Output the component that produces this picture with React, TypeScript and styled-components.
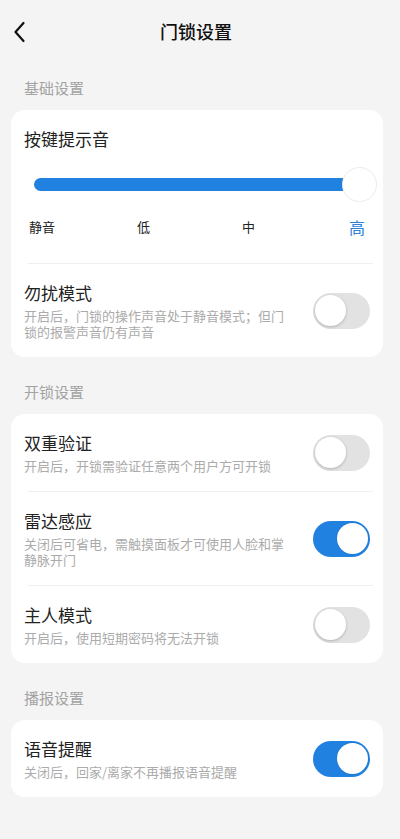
import React from "react";
import styled, { createGlobalStyle } from "styled-components";

const GlobalStyle = createGlobalStyle`
  html, body {
    margin: 0;
    padding: 0;
    background: #f4f4f4;
  }
  body {
    font-family: "Noto Sans CJK SC", "Noto Sans", sans-serif;
    -webkit-font-smoothing: antialiased;
  }
  * { box-sizing: border-box; }
`;

const Page = styled.div`
  width: 400px;
  min-height: 839px;
  background: #f4f4f4;
`;

const Header = styled.header`
  height: 64px;
  display: grid;
  grid-template-columns: 48px 1fr 56px;
  align-items: center;
`;

const BackButton = styled.button`
  border: none;
  background: none;
  padding: 0 0 0 12px;
  height: 64px;
  display: flex;
  align-items: center;
  cursor: pointer;
`;

const Title = styled.h1`
  margin: 0 0 2px;
  text-align: center;
  font-size: 18px;
  font-weight: 500;
  color: #111;
  line-height: 24px;
`;

const SectionTitle = styled.div`
  padding: 14px 24px 12px;
  font-size: 15px;
  line-height: 20px;
  color: #a3a3a3;
`;

const Card = styled.section`
  margin: 0 17px 11px 11px;
  background: #fff;
  border-radius: 14px;
  overflow: hidden;
`;

const SliderBlock = styled.div`
  padding: 17px 0 0;
`;

const BlockTitle = styled.div`
  padding-left: 13px;
  font-size: 17px;
  line-height: 24px;
  color: #222;
`;

const SliderRow = styled.div`
  margin: 16px 6px 0 23px;
  height: 35px;
  display: flex;
  align-items: center;
`;

const Track = styled.div`
  flex: 1;
  height: 13px;
  background: #2081e0;
  border-radius: 7px 0 0 7px;
`;

const Thumb = styled.div`
  width: 35px;
  height: 35px;
  margin-left: -1px;
  border-radius: 50%;
  background: #fff;
  border: 1px solid #ececec;
`;

const Levels = styled.div`
  margin: 15px 0 0;
  padding-left: 18px;
  display: grid;
  grid-template-columns: 108px 105px 107px auto;
  align-items: center;
  height: 20px;
`;

const Level = styled.span<{ $active?: boolean }>`
  font-size: ${(p) => (p.$active ? "16px" : "13px")};
  line-height: 20px;
  color: ${(p) => (p.$active ? "#2a82db" : "#222")};
`;

const Divider = styled.div<{ $top?: number }>`
  height: 1px;
  background: #efefef;
  margin: ${(p) => p.$top ?? 0}px 10px 0 17px;
`;

const Row = styled.div`
  display: flex;
  align-items: center;
  padding: 17px 13px 17px 13px;
`;

const RowText = styled.div`
  flex: 1;
  margin-right: 24px;
  min-width: 0;
`;

const RowTitle = styled.div`
  font-size: 17px;
  line-height: 24px;
  color: #222;
`;

const RowDesc = styled.div`
  margin-top: 3px;
  font-size: 13px;
  line-height: 16px;
  color: #ababab;
`;

const Toggle = styled.div<{ $on: boolean }>`
  flex: none;
  width: 57px;
  height: 36px;
  border-radius: 18px;
  padding: 0 2px;
  display: flex;
  align-items: center;
  justify-content: ${(p) => (p.$on ? "flex-end" : "flex-start")};
  background: ${(p) => (p.$on ? "#2081e0" : "#e2e2e2")};
`;

const Knob = styled.div<{ $on: boolean }>`
  width: 31px;
  height: 31px;
  border-radius: 50%;
  background: #fff;
  box-shadow: ${(p) =>
    p.$on ? "0 0 0 1px rgba(0,0,0,0.04)" : "0 1px 3px rgba(0,0,0,0.22)"};
`;

const Switch = ({ on }: { on: boolean }) => (
  <Toggle $on={on}>
    <Knob $on={on} />
  </Toggle>
);

type Item = { title: string; desc: string; on: boolean };

const SettingRow = ({ title, desc, on }: Item) => (
  <Row>
    <RowText>
      <RowTitle>{title}</RowTitle>
      <RowDesc>{desc}</RowDesc>
    </RowText>
    <Switch on={on} />
  </Row>
);

const unlockItems: Item[] = [
  { title: "双重验证", desc: "开启后，开锁需验证任意两个用户方可开锁", on: false },
  { title: "雷达感应", desc: "关闭后可省电，需触摸面板才可使用人脸和掌静脉开门", on: true },
  { title: "主人模式", desc: "开启后，使用短期密码将无法开锁", on: false },
];

export default function App() {
  return (
    <Page>
      <GlobalStyle />
      <Header>
        <BackButton aria-label="返回">
          <svg width="14" height="22" viewBox="0 0 14 22" fill="none">
            <path d="M11.5 2 L3.5 11 L11.5 20" stroke="#111" strokeWidth="2.2" strokeLinecap="round" strokeLinejoin="round" />
          </svg>
        </BackButton>
        <Title>门锁设置</Title>
        <span />
      </Header>

      <SectionTitle>基础设置</SectionTitle>
      <Card>
        <SliderBlock>
          <BlockTitle>按键提示音</BlockTitle>
          <SliderRow>
            <Track />
            <Thumb />
          </SliderRow>
          <Levels>
            <Level>静音</Level>
            <Level>低</Level>
            <Level>中</Level>
            <Level $active>高</Level>
          </Levels>
          <Divider $top={26} />
        </SliderBlock>
        <SettingRow
          title="勿扰模式"
          desc="开启后，门锁的操作声音处于静音模式；但门锁的报警声音仍有声音"
          on={false}
        />
      </Card>

      <SectionTitle>开锁设置</SectionTitle>
      <Card>
        {unlockItems.map((it, i) => (
          <React.Fragment key={it.title}>
            {i > 0 && <Divider />}
            <SettingRow {...it} />
          </React.Fragment>
        ))}
      </Card>

      <SectionTitle>播报设置</SectionTitle>
      <Card>
        <SettingRow title="语音提醒" desc="关闭后，回家/离家不再播报语音提醒" on={true} />
      </Card>
    </Page>
  );
}
